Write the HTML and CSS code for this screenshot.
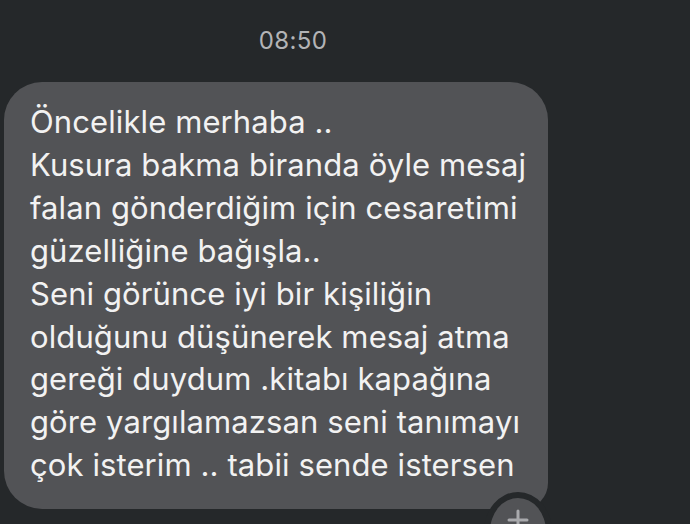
FILE: index.html
```html
<!DOCTYPE html>
<html lang="tr">
<head>
<meta charset="utf-8">
<link rel="stylesheet" href="styles.css">
</head>
<body>
<div class="screen">
  <div class="time">08:50</div>
  <div class="row">
    <div class="bubble">
      <p class="msg">Öncelikle merhaba ..<br>Kusura bakma biranda öyle mesaj<br>falan gönderdiğim için cesaretimi<br>güzelliğine bağışla..<br>Seni görünce iyi bir kişiliğin<br>olduğunu düşünerek mesaj atma<br>gereği duydum .kitabı kapağına<br>göre yargılamazsan seni tanımayı<br>çok isterim .. tabii sende istersen</p>
      <div class="react"><svg width="22" height="22" viewBox="0 0 22 22"><path d="M11 2v18M2 11h18" stroke="#a9aaad" stroke-width="3" stroke-linecap="round"/></svg></div>
    </div>
  </div>
</div>
</body>
</html>
```
FILE: styles.css
```css
html, body {
  margin: 0;
  padding: 0;
  background: #25282a;
  overflow: hidden;
}
.screen {
  width: 690px;
  height: 524px;
  overflow: hidden;
  font-family: "Inter", "Roboto", sans-serif;
  color: #f2f2f2;
}
.time {
  text-align: center;
  font-size: 24px;
  color: #b3b4b6;
  padding: 26px 104px 0 0;
  height: 82px;
  box-sizing: border-box;
  letter-spacing: 0.4px;
}
.row {
  padding-left: 4px;
}
.bubble {
  position: relative;
  width: 544px;
  height: 427px;
  box-sizing: border-box;
  background: #525356;
  border-radius: 38px 38px 26px 38px;
  padding: 19px 0 0 26px;
}
.msg {
  margin: 0;
  font-size: 31px;
  line-height: 42.9px;
  letter-spacing: 0.1px;
  white-space: nowrap;
}
.react {
  position: absolute;
  left: 480px;
  top: 410px;
  width: 56px;
  height: 56px;
  border-radius: 50%;
  background: #525356;
  border: 6px solid #25282a;
  display: flex;
  justify-content: center;
  padding-top: 11px;
  box-sizing: content-box;
}
.react svg {
  display: block;
}
```
